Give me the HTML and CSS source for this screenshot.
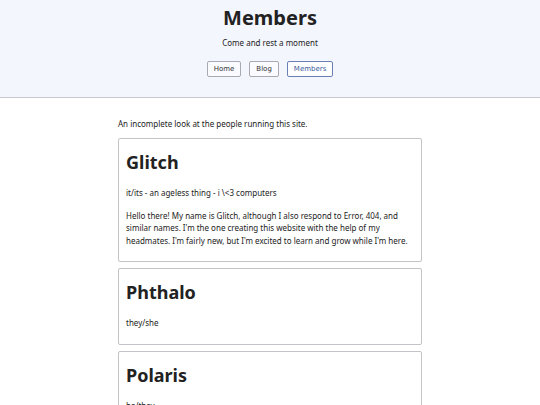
FILE: index.html
```html
<!DOCTYPE html>
<html lang="en">
<head>
  <meta charset="UTF-8" />
  <meta name="viewport" content="width=device-width, initial-scale=1.0"/>
  <title>Members</title>
  <link rel="stylesheet" href="styles.css">
</head>
<body>

  <header>
    <h1>Members</h1>
    <p>Come and rest a moment</p>
    <nav>
      <a href="#">Home</a>
      <a href="#">Blog</a>
      <a href="#" class="current">Members</a>
    </nav>
  </header>

  <main>
    <p class="intro">An incomplete look at the people running this site.</p>

    <div class="member">
      <h2>Glitch</h2>
      <p>it/its - an ageless thing - i \&lt;3 computers</p>
      <p>Hello there! My name is Glitch, although I also respond to Error, 404, and similar names. I'm the one creating this website with the help of my headmates. I'm fairly new, but I'm excited to learn and grow while I'm here.</p>
    </div>

    <div class="member">
      <h2>Phthalo</h2>
      <p>they/she</p>
    </div>

    <div class="member">
      <h2>Polaris</h2>
      <p>he/they</p>
    </div>
  </main>

</body>
</html>
```

FILE: styles.css
```css
* {
  margin: 0;
  padding: 0;
  box-sizing: border-box;
}

body {
  font-family: 'Noto Sans', 'Open Sans', sans-serif;
  color: #222;
  background: #fff;
  font-size: 8px;
}

header {
  background-color: #f4f6fe;
  border-bottom: 1px solid #c8c8cc;
  text-align: center;
  padding: 5px 20px 20px;
}

header h1 {
  font-size: 20px;
  line-height: 26px;
  font-weight: 700;
}

header p {
  margin-top: 6px;
  line-height: 11px;
}

nav {
  display: flex;
  justify-content: center;
  gap: 8px;
  margin-top: 13px;
}

nav a {
  display: inline-block;
  padding: 3px 6px;
  font-family: 'DejaVu Sans', sans-serif;
  font-size: 7px;
  line-height: 8px;
  color: #333;
  text-decoration: none;
  background: #fafbff;
  border: 1px solid #a9a9b2;
  border-radius: 2px;
}

nav a.current {
  color: #3b5aa0;
  border-color: #6a7fb8;
  background: #fff;
}

main {
  width: 304px;
  margin: 0 auto;
  padding: 20px 0 20px;
}

.intro {
  line-height: 11px;
  margin-bottom: 9px;
}

.member {
  border: 1px solid #c4c4c8;
  border-radius: 2px;
  padding: 11px 7px 14px;
  margin-bottom: 6px;
}

.member h2 {
  font-size: 18px;
  line-height: 24px;
  margin-bottom: 13px;
}

.member p {
  line-height: 12.5px;
  margin-bottom: 10px;
}

.member p:last-child {
  margin-bottom: 0;
}
```
